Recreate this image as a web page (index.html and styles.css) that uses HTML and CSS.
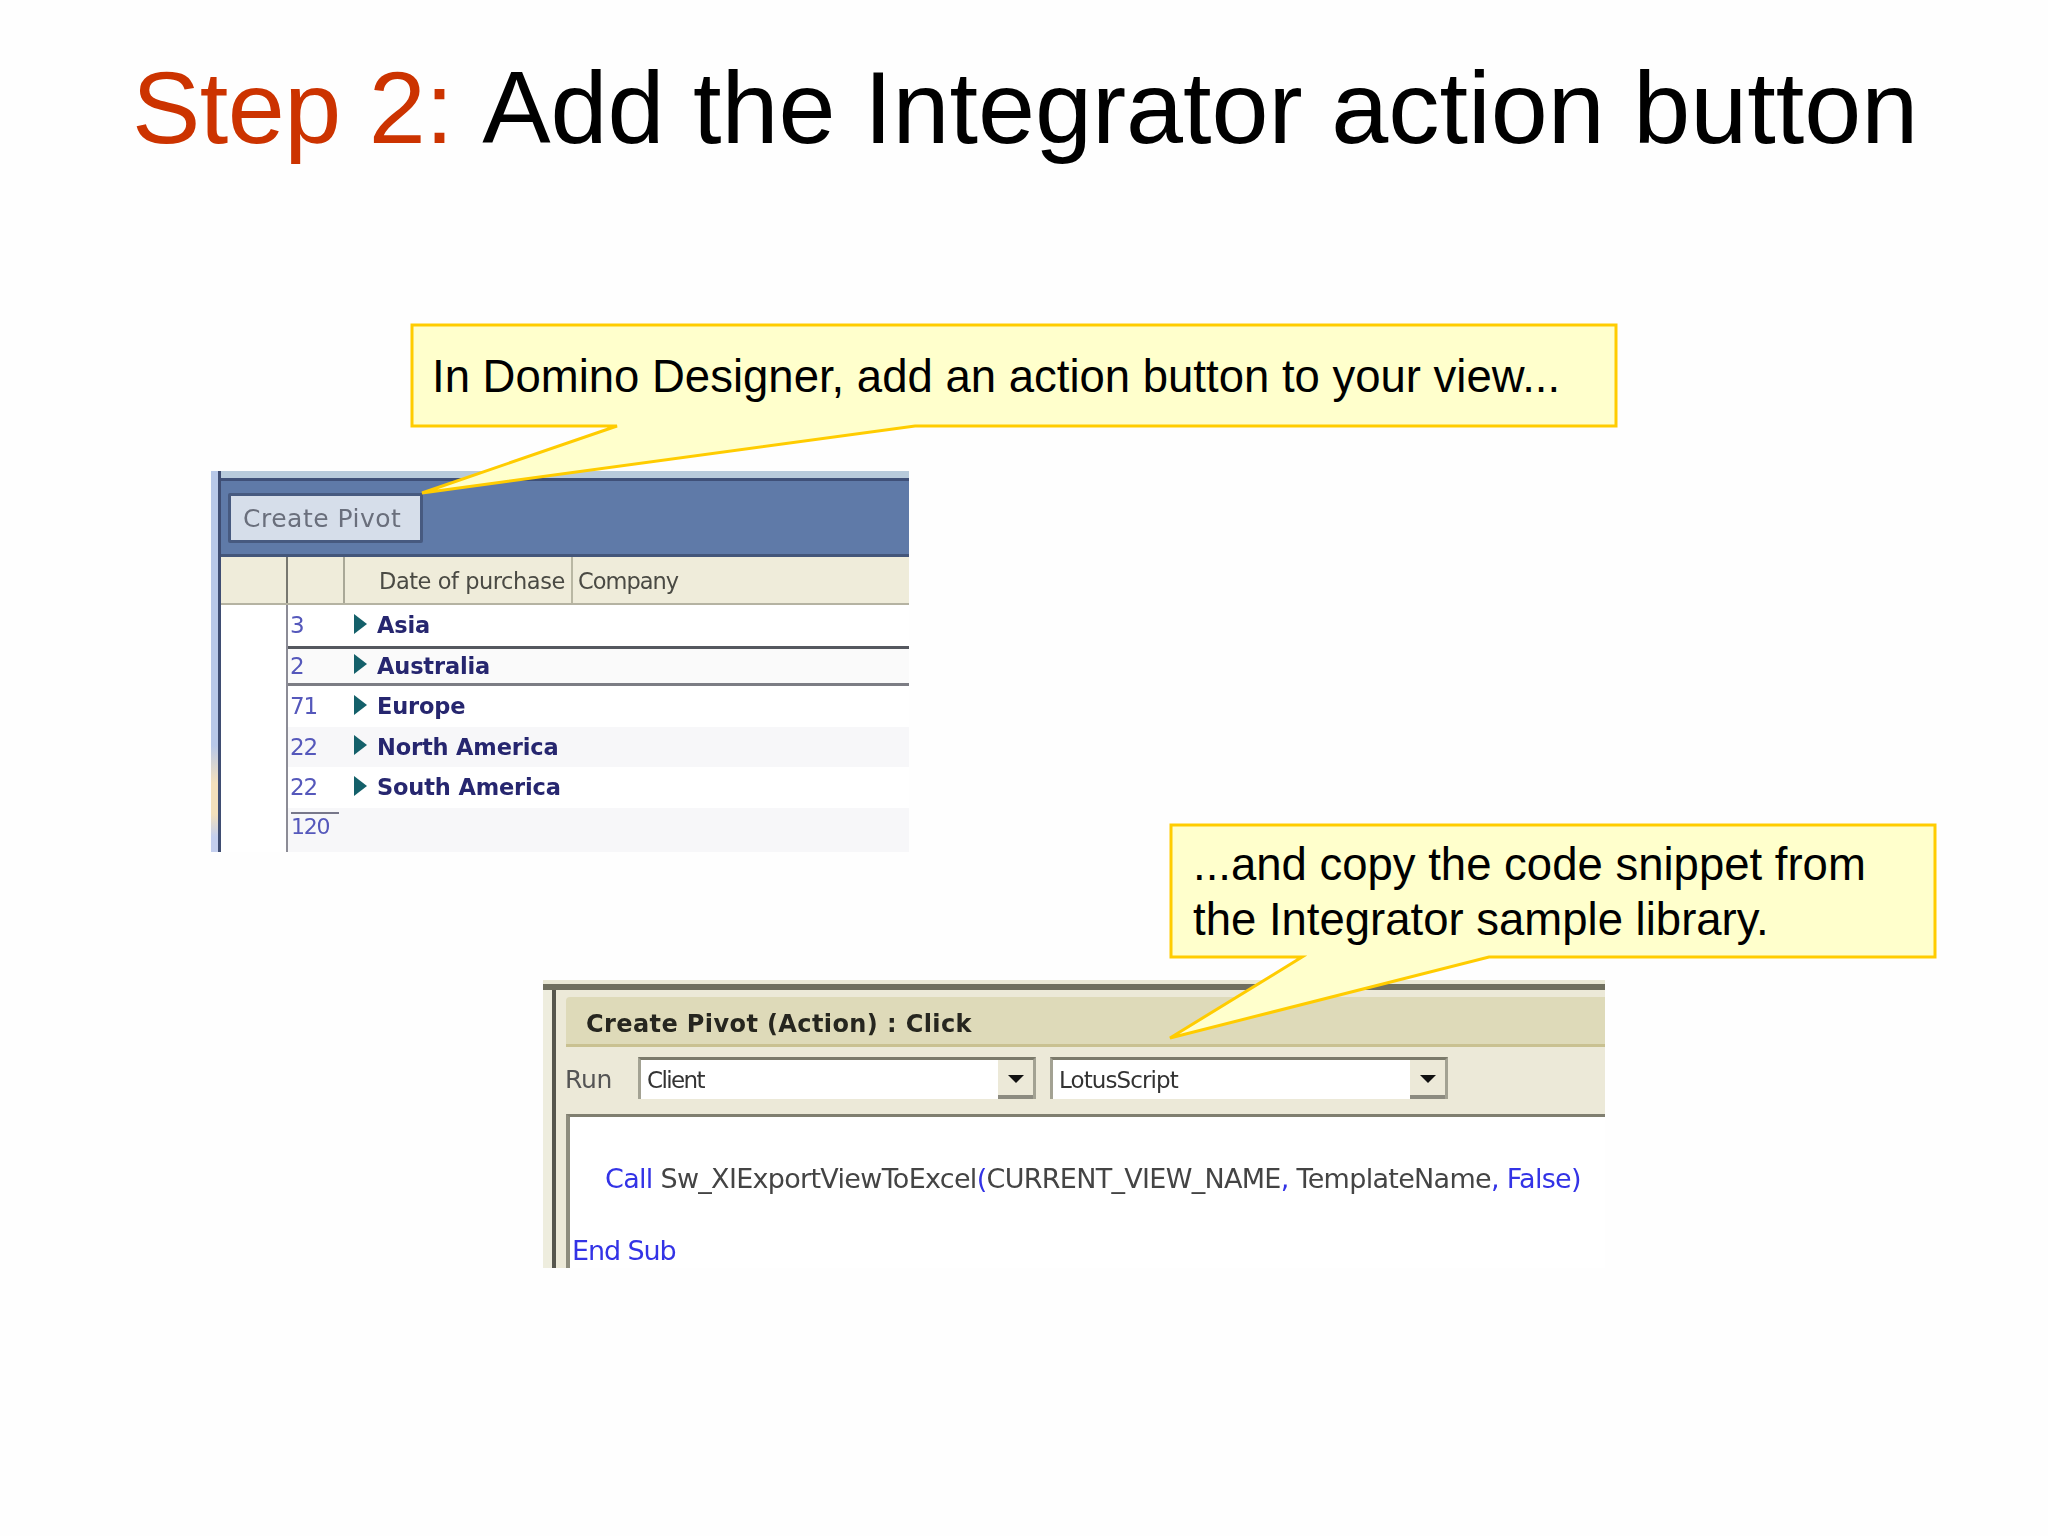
FILE: index.html
```html
<!DOCTYPE html>
<html lang="en">
<head>
<meta charset="utf-8">
<title>Step 2: Add the Integrator action button</title>
<link rel="stylesheet" href="styles.css">
</head>
<body>
<main class="slide">
  <h1 class="title"><span class="title-step">Step 2:</span> Add the Integrator action button</h1>

  <section class="shot view-shot">
    <div class="view-rail"></div>
    <div class="view-main">
      <div class="view-toolbar"><div class="pivot-btn">Create Pivot</div></div>
      <div class="view-head">
        <div class="cell-a"></div><div class="cell-b"></div>
        <div class="head-date">Date of purchase</div>
        <div class="head-company">Company</div>
      </div>
      <div class="view-rows">
        <div class="view-row"><span class="num">3</span><span class="twisty"></span><b class="cat">Asia</b></div>
        <div class="view-row selected"><span class="num">2</span><span class="twisty"></span><b class="cat">Australia</b></div>
        <div class="view-row"><span class="num">71</span><span class="twisty"></span><b class="cat">Europe</b></div>
        <div class="view-row tint"><span class="num">22</span><span class="twisty"></span><b class="cat">North America</b></div>
        <div class="view-row"><span class="num">22</span><span class="twisty"></span><b class="cat">South America</b></div>
        <div class="view-row tint last"><span class="num total">120</span></div>
      </div>
    </div>
  </section>

  <section class="shot code-shot">
    <div class="code-top"></div>
    <div class="code-frame">
      <div class="code-rail"></div>
      <div class="code-inner">
        <div class="code-title">Create Pivot (Action) : Click</div>
        <div class="code-controls">
          <span class="run-label">Run</span>
          <div class="select"><span class="select-client">Client</span><i class="select-btn"></i></div>
          <div class="select"><span class="select-lang">LotusScript</span><i class="select-btn"></i></div>
        </div>
        <div class="editor">
          <p class="code-call"><span class="kw">Call</span> Sw_XIExportViewToExcel<span class="kw">(</span>CURRENT_VIEW_NAME<span class="kw">,</span> TemplateName<span class="kw">, False)</span></p>
          <p class="code-end kw">End Sub</p>
        </div>
      </div>
    </div>
  </section>

  <div class="callout callout-one">
    <svg class="callout-shape" viewBox="0 0 1208 172" aria-hidden="true"><path d="M2 2H1206V103H505L12 170L207 103H2Z"/></svg>
    <p class="callout-text">In Domino Designer, add an action button to your view...</p>
  </div>

  <div class="callout callout-two">
    <svg class="callout-shape" viewBox="0 0 769 217" aria-hidden="true"><path d="M3 2H767V134H321L2 215L134 134H3Z"/></svg>
    <p class="callout-text">...and copy the code snippet from<br>the Integrator sample library.</p>
  </div>
</main>
</body>
</html>
```
FILE: styles.css
```css
html, body { margin: 0; padding: 0; background: #fff; }
.slide { position: relative; width: 2048px; height: 1536px; overflow: hidden; background: #fefefe; font-family: "Liberation Sans", Arial, sans-serif; color: #000; }
.title { margin: 0; padding: 46px 0 0 132px; font-size: 102.5px; line-height: 124px; font-weight: 400; white-space: nowrap; }
.title-step { color: #cc3300; letter-spacing: -.5px; margin-right: 6px; }

.shot { position: absolute; overflow: hidden; }

.view-shot { left: 211px; top: 471px; width: 698px; height: 381px; display: flex; background: #fff; }
.view-rail { width: 7px; flex: none; border-right: 3px solid #3f4d72; background: linear-gradient(#b8c8e8 0, #b8c8e8 72%, #f3e0bc 82%, #f3e0bc 90%, #c4cfee 96%); }
.view-main { flex: 1; min-width: 0; display: flex; flex-direction: column; }
.view-toolbar { flex: none; height: 86px; box-sizing: border-box; position: relative; background: #5f7aa8; border-top: 7px solid #b7cadb; }
.view-toolbar::before { content: ""; position: absolute; left: 0; right: 0; top: 0; height: 3px; background: #3f5078; }
.view-toolbar::after { content: ""; position: absolute; left: 0; right: 0; bottom: 0; height: 3px; background: #44567a; }
.pivot-btn { position: absolute; left: 7px; top: 15px; width: 195px; height: 50px; box-sizing: border-box; padding-left: 12px; border: 3px solid #475a80; border-radius: 2px; background: #d6deea; color: #6a6f7c; font-family: "DejaVu Sans", sans-serif; font-size: 25px; line-height: 46px; white-space: nowrap; letter-spacing: .5px; filter: blur(.7px); }

.view-head { flex: none; height: 48px; box-sizing: border-box; display: flex; background: #efecda; border-bottom: 2px solid #b5b3a2; font-family: "DejaVu Sans", sans-serif; color: #4a4a44; }
.cell-a { width: 65px; flex: none; }
.cell-b { width: 59px; flex: none; box-sizing: border-box; border-left: 2px solid #77776f; border-right: 2px solid #a9a897; }
.head-date { width: 228px; flex: none; box-sizing: border-box; padding-left: 34px; font-size: 22.5px; line-height: 48px; white-space: nowrap; border-right: 2px solid #b9b7a3; letter-spacing: -.45px; }
.head-company { padding-left: 5px; font-size: 22.5px; line-height: 48px; letter-spacing: -1px; }
.head-date, .head-company { filter: blur(.7px); }

.view-rows { flex: 1; margin-left: 65px; border-left: 2px solid #8c8c96; display: flex; flex-direction: column; }
.view-row { flex: none; height: 40.5px; box-sizing: border-box; display: flex; align-items: center; }
.view-row.selected { border-top: 3px solid #55585f; border-bottom: 3px solid #7c7d84; background: #fafafa; }
.view-row.tint { background: #f7f7f9; }
.view-row.last { flex: 1; align-items: flex-start; }
.num { width: 66px; flex: none; box-sizing: border-box; padding-left: 2px; font-family: "DejaVu Sans", sans-serif; font-size: 23px; letter-spacing: -1.2px; color: #5558bb; filter: blur(.7px); }
.num.total { width: 48px; margin: 4px 0 0 3px; padding: 0; border-top: 2px solid #77778a; font-size: 22px; }
.twisty { flex: none; width: 0; height: 0; margin: -3px 10px 0 0; border-style: solid; border-width: 10px 0 10px 13px; border-color: transparent transparent transparent #14606a; filter: blur(.6px); }
.cat { font-family: "DejaVu Sans", sans-serif; font-size: 22.5px; font-weight: 700; color: #26266f; white-space: nowrap; letter-spacing: -.15px; filter: blur(.7px); }

.code-shot { left: 543px; top: 980px; width: 1062px; height: 288px; display: flex; flex-direction: column; background: #fff; }
.code-top { flex: none; height: 4px; background: #e9e8d5; border-bottom: 6px solid #6f6f5f; }
.code-frame { flex: 1; min-height: 0; display: flex; }
.code-rail { flex: none; width: 9px; border-right: 4px solid #56564d; background: #eeedde; }
.code-inner { flex: 1; min-width: 0; display: flex; flex-direction: column; background: #ece9d8; }
.code-title { flex: none; height: 50px; margin: 7px 0 0 10px; box-sizing: border-box; padding-left: 20px; background: #dedab9; border-bottom: 3px solid #c9c191; border-top-left-radius: 4px; font-family: "DejaVu Sans", sans-serif; font-weight: 700; font-size: 24px; line-height: 54px; letter-spacing: .4px; color: #26261f; white-space: nowrap; filter: blur(.6px); }
.code-controls { flex: none; height: 67px; box-sizing: border-box; display: flex; align-items: flex-start; padding: 10px 0 0 10px; gap: 14px; color: #555; font-family: "DejaVu Sans", sans-serif; font-size: 25px; }
.run-label { width: 59px; line-height: 46px; letter-spacing: -.3px; margin-left: -1px; filter: blur(.6px); }
.select { width: 398px; height: 42px; box-sizing: border-box; background: #fff; border: 3px solid #a3a293; border-top-color: #7b7a6b; border-bottom: 0; display: flex; justify-content: space-between; align-items: center; padding-left: 6px; font-size: 23px; color: #333; }
.select-client { letter-spacing: -1.6px; filter: blur(.6px); }
.select-lang { letter-spacing: -.9px; filter: blur(.6px); }
.select-btn { flex: none; width: 35px; height: 39px; box-sizing: border-box; background: #ece9d8; border-bottom: 4px solid #8c8b80; position: relative; display: block; }
.select-btn::after { content: ""; position: absolute; left: 10px; top: 15px; border-style: solid; border-width: 8px 8px 0 8px; border-color: #111 transparent transparent transparent; filter: blur(.5px); }
.editor { flex: 1; margin-left: 10px; background: #fff; border-top: 3px solid #807f70; border-left: 4px solid #8d8c7d; font-family: "DejaVu Sans", sans-serif; font-size: 27px; color: #444; white-space: nowrap; }
.editor p { margin: 0; filter: blur(.6px); }
.code-call { padding: 46px 0 0 35px; letter-spacing: -.7px; line-height: 32px; }
.code-end { padding: 40px 0 0 2px; line-height: 32px; letter-spacing: -1.1px; }
.kw { color: #3333e6; }

.callout { position: absolute; }
.callout-shape { position: absolute; left: 0; top: 0; width: 100%; height: 100%; overflow: visible; }
.callout-shape path { fill: #ffffcc; stroke: #ffcc00; stroke-width: 3; }
.callout-text { position: relative; margin: 0; font-size: 45.5px; white-space: nowrap; }
.callout-one { left: 410px; top: 323px; width: 1208px; height: 172px; }
.callout-one .callout-text { padding: 27px 0 0 22px; line-height: 54px; }
.callout-two { left: 1168px; top: 823px; width: 769px; height: 217px; }
.callout-two .callout-text { padding: 14px 0 0 25px; line-height: 55px; }
```
